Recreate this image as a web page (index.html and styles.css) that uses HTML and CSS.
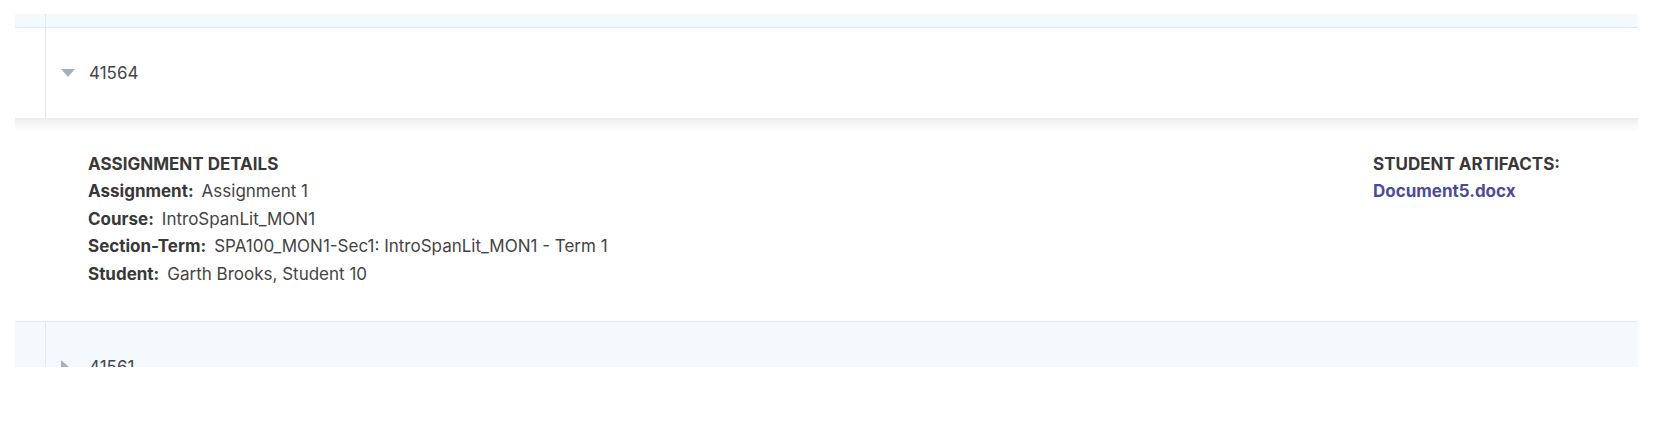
FILE: index.html
```html
<!DOCTYPE html>
<html lang="en">
<head>
<meta charset="utf-8">
<title>Assignments</title>
<link rel="stylesheet" href="styles.css">
</head>
<body>
<div class="table">
  <div class="row row-strip">
    <div class="cell-gutter"></div>
    <div class="cell-main"></div>
  </div>
  <div class="row row-open">
    <div class="cell-gutter"></div>
    <div class="cell-main">
      <svg class="caret" width="14" height="8" viewBox="0 0 14 8"><path d="M0 0 H14 L7 8 Z" fill="#a7afbd"/></svg>
      <span class="row-id">41564</span>
    </div>
  </div>
  <div class="details">
    <div class="details-col">
      <div class="details-title">ASSIGNMENT DETAILS</div>
      <div class="detail"><span class="label">Assignment:</span><span class="value">Assignment 1</span></div>
      <div class="detail"><span class="label">Course:</span><span class="value">IntroSpanLit_MON1</span></div>
      <div class="detail"><span class="label">Section-Term:</span><span class="value">SPA100_MON1-Sec1: IntroSpanLit_MON1 - Term 1</span></div>
      <div class="detail"><span class="label">Student:</span><span class="value">Garth Brooks, Student 10</span></div>
    </div>
    <div class="artifacts-col">
      <div class="details-title">STUDENT ARTIFACTS:</div>
      <a class="artifact" href="#">Document5.docx</a>
    </div>
  </div>
  <div class="row row-closed">
    <div class="cell-gutter"></div>
    <div class="cell-main">
      <svg class="caret" width="8" height="14" viewBox="0 0 8 14"><path d="M0 0 V14 L8 7 Z" fill="#a7afbd"/></svg>
      <span class="row-id">41561</span>
    </div>
  </div>
</div>
</body>
</html>
```

FILE: styles.css
```css
html, body {
  margin: 0;
  padding: 0;
  background: #ffffff;
}

body {
  font-family: Inter, "Noto Sans", "Liberation Sans", sans-serif;
  font-size: 17px;
  color: #444444;
}

.table {
  margin: 14px 0 0 15px;
  width: 1623px;
  height: 353px;
  overflow: hidden;
}

.row {
  display: flex;
}

.cell-gutter {
  width: 30px;
  border-right: 1px solid #e4e7eb;
  flex: none;
}

.cell-main {
  flex: 1;
  display: flex;
  align-items: center;
}

.row-strip {
  height: 13px;
  background: #f4f9fd;
  border-bottom: 1px solid #e5e8ee;
}

.row-open {
  height: 90px;
  background: #ffffff;
}

.row-closed {
  height: 90px;
  background: #f4f9fd;
  border-top: 1px solid #e5e8ee;
}

.caret {
  margin-left: 15px;
  flex: none;
}

.row-open .row-id {
  margin-left: 14px;
}

.row-closed .row-id {
  margin-left: 20px;
}

.row-id {
  font-size: 17px;
  color: #454545;
}

.details {
  display: flex;
  justify-content: space-between;
  padding: 33px 0 33px 73px;
  background: linear-gradient(#ececec 0px, #f6f6f6 6px, #ffffff 14px);
  line-height: 27.4px;
}

.details-title {
  font-weight: 700;
  color: #383838;
}

.label {
  font-weight: 700;
  color: #383838;
  margin-right: 8px;
}

.value {
  color: #444444;
}

.artifacts-col {
  width: 265px;
  display: flex;
  flex-direction: column;
}

.artifact {
  font-weight: 700;
  color: #4e4a9a;
  text-decoration: none;
}
```
